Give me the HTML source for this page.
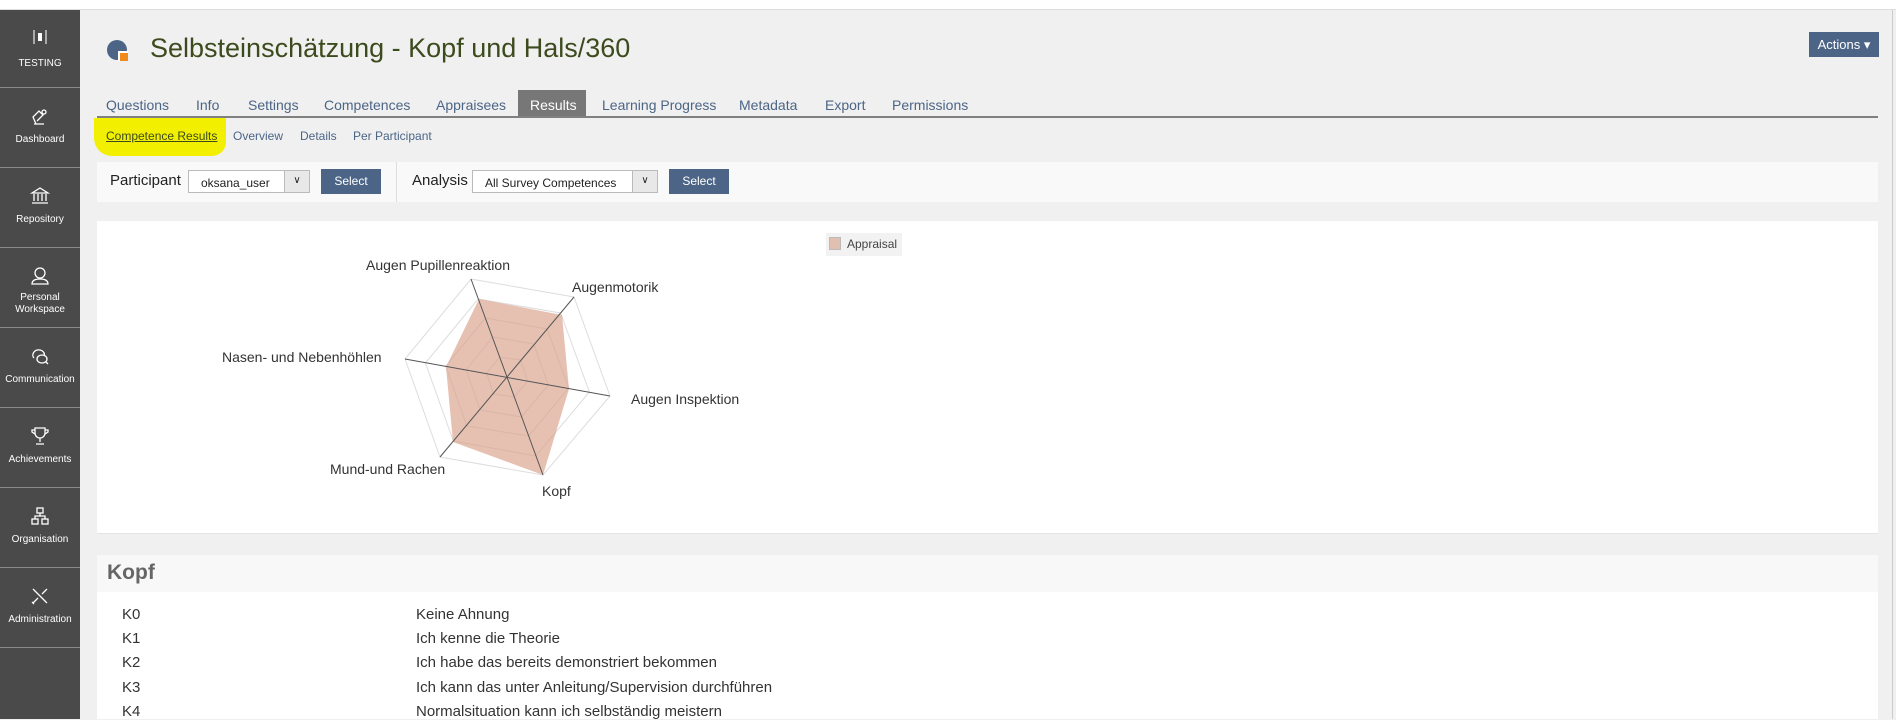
<!DOCTYPE html>
<html><head><meta charset="utf-8"><style>
*{margin:0;padding:0;box-sizing:border-box}
body{width:1896px;height:719px;overflow:hidden;background:#f0f0f0;font-family:"Liberation Sans",Arial,sans-serif;position:relative}
.top{position:absolute;left:0;top:0;width:1896px;height:10px;background:#fff;border-bottom:1px solid #ddd}
.side{position:absolute;left:0;top:10px;width:80px;height:709px;background:#4a4a4a}
.it{position:absolute;left:0;width:80px;height:80px;border-bottom:1px solid #8a8a8a;color:#fff;font-size:10px;text-align:center}
.it .lb{position:absolute;left:0;right:0;top:46px;line-height:12px}
.it svg{position:absolute;left:30px;top:18px}
.abs{position:absolute;white-space:nowrap}
.tab{position:absolute;top:97px;font-size:14px;color:#4c6586}
.sub{position:absolute;top:129px;font-size:12px;color:#4c6586}
.btn{position:absolute;background:#4c6586;color:#fff;font-size:12px;text-align:center}
.row{position:absolute;font-size:15px;color:#333}
</style></head><body>
<div class="top"></div>
<div class="side">
 <div class="it" style="top:0;height:78px"><div style="position:absolute;left:33px;top:20px;width:14px;height:14px;border:2px solid #aaa;border-top:none;border-bottom:none"></div><div style="position:absolute;left:38px;top:23px;width:4px;height:8px;background:#fff"></div><div class="lb" style="top:48px">TESTING</div></div>
 <div class="it" style="top:78px"><svg width="20" height="22" viewBox="0 0 20 22" fill="none" stroke="#fff" stroke-width="1.3"><path d="M4 18h10M6 18l-3-7 6-6 4 4-6 6"/><circle cx="14" cy="6" r="2"/></svg><div class="lb">Dashboard</div></div>
 <div class="it" style="top:158px"><svg width="20" height="20" viewBox="0 0 20 20" fill="none" stroke="#fff" stroke-width="1.3"><path d="M2 7L10 2l8 5H2zM4 8v7M8 8v7M12 8v7M16 8v7M2 17h16"/></svg><div class="lb">Repository</div></div>
 <div class="it" style="top:238px"><svg width="20" height="20" viewBox="0 0 20 20" fill="none" stroke="#fff" stroke-width="1.3"><circle cx="10" cy="7" r="5"/><path d="M2 18c0-4 4-5 8-5s8 1 8 5z"/></svg><div class="lb" style="top:44px">Personal<br>Workspace</div></div>
 <div class="it" style="top:318px"><svg width="20" height="20" viewBox="0 0 20 20" fill="none" stroke="#fff" stroke-width="1.3"><path d="M4 12c-3-3 0-9 6-8 4 1 5 4 4 6"/><ellipse cx="12" cy="13" rx="5" ry="4"/><path d="M16 16l2 2"/></svg><div class="lb">Communication</div></div>
 <div class="it" style="top:398px"><svg width="20" height="20" viewBox="0 0 20 20" fill="none" stroke="#fff" stroke-width="1.3"><path d="M5 2h10v5a5 5 0 0 1-10 0zM10 12v4M6 18h8M5 4H2v2l3 2M15 4h3v2l-3 2"/></svg><div class="lb">Achievements</div></div>
 <div class="it" style="top:478px"><svg width="20" height="20" viewBox="0 0 20 20" fill="none" stroke="#fff" stroke-width="1.3"><rect x="7" y="2" width="6" height="5"/><rect x="2" y="13" width="6" height="5"/><rect x="12" y="13" width="6" height="5"/><path d="M10 7v3M5 13v-3h10v3"/></svg><div class="lb">Organisation</div></div>
 <div class="it" style="top:558px"><svg width="20" height="20" viewBox="0 0 20 20" fill="none" stroke="#fff" stroke-width="1.3"><path d="M3 3l14 14M3 17l5-5M12 8l5-5M2 16l2 2"/></svg><div class="lb">Administration</div></div>
</div>

<svg class="abs" style="left:106px;top:38px" width="24" height="24" viewBox="0 0 24 24"><circle cx="11" cy="12" r="10" fill="#4c6586"/><path d="M12 13h10v10H12z" fill="#fff"/><path d="M14 15h8v8h-8z" fill="#f08a1c"/></svg>
<div class="abs" style="left:150px;top:32px;font-size:27px;color:#3c4b1e;line-height:32px">Selbsteinschätzung - Kopf und Hals/360</div>
<div class="btn" style="left:1809px;top:32px;width:70px;height:25px;line-height:25px;font-size:13px">Actions ▾</div>

<div style="position:absolute;left:518px;top:90px;width:68px;height:27px;background:#777"></div>
<div class="tab" style="left:106px">Questions</div>
<div class="tab" style="left:196px">Info</div>
<div class="tab" style="left:248px">Settings</div>
<div class="tab" style="left:324px">Competences</div>
<div class="tab" style="left:436px">Appraisees</div>
<div class="tab" style="left:530px;color:#fff">Results</div>
<div class="tab" style="left:602px">Learning Progress</div>
<div class="tab" style="left:739px">Metadata</div>
<div class="tab" style="left:825px">Export</div>
<div class="tab" style="left:892px">Permissions</div>
<div style="position:absolute;left:97px;top:116px;width:1781px;height:2px;background:#808080"></div>

<div style="position:absolute;left:94px;top:118px;width:132px;height:38px;background:#f2f000;border-radius:0 0 14px 18px"></div>
<div class="sub" style="left:106px;color:#3c4b1e;text-decoration:underline">Competence Results</div>
<div class="sub" style="left:233px">Overview</div>
<div class="sub" style="left:300px">Details</div>
<div class="sub" style="left:353px">Per Participant</div>

<div style="position:absolute;left:97px;top:162px;width:1781px;height:40px;background:#f9f9f9"></div>
<div style="position:absolute;left:396px;top:162px;width:1px;height:40px;background:#ddd"></div>
<div class="abs" style="left:110px;top:172px;font-size:15px;color:#222">Participant</div>
<div class="abs" style="left:188px;top:170px;width:122px;height:23px;background:#fff;border:1px solid #bbb;font-size:12px;padding:5px 0 0 12px;color:#222">oksana_user<span style="position:absolute;right:0;top:0;width:25px;height:21px;background:#e8e8e8;border-left:1px solid #bbb;font-size:10px;text-align:center;line-height:20px">∨</span></div>
<div class="btn" style="left:321px;top:169px;width:60px;height:25px;line-height:25px">Select</div>
<div class="abs" style="left:412px;top:172px;font-size:15px;color:#222">Analysis</div>
<div class="abs" style="left:472px;top:170px;width:186px;height:23px;background:#fff;border:1px solid #bbb;font-size:12px;padding:5px 0 0 12px;color:#222">All Survey Competences<span style="position:absolute;right:0;top:0;width:25px;height:21px;background:#e8e8e8;border-left:1px solid #bbb;font-size:10px;text-align:center;line-height:20px">∨</span></div>
<div class="btn" style="left:669px;top:169px;width:60px;height:25px;line-height:25px">Select</div>

<div style="position:absolute;left:97px;top:221px;width:1781px;height:313px;background:#fff;border-bottom:1px solid #e4e4e4"></div>
<div style="position:absolute;left:826px;top:233px;width:76px;height:23px;background:#f2f2f2"></div>
<div style="position:absolute;left:829px;top:237px;width:12px;height:13px;background:#e2c0b0;border:1px solid #bbb"></div>
<div class="abs" style="left:847px;top:237px;font-size:12px;color:#444">Appraisal</div>
<svg class="abs" style="left:0;top:0" width="1896" height="719">
<g fill="none" stroke="#ddd" stroke-width="1">
<polygon points="471,279 574,297 610,396 543,475 440,457 405,359"/>
<polygon points="478.2,299 560.6,313 589.4,392 535.8,456 453.4,441 425.4,363"/>
<polygon points="485.4,318 547.2,329 568.8,388 528.6,436 466.8,426 445.8,366"/>
<polygon points="492.6,337 533.8,344 548.2,385 521.4,417 480.2,410 466.2,370"/>
<polygon points="499.8,357 520.4,360 527.6,381 514.2,397 493.6,394 486.6,373"/>
</g>
<polygon points="479,299 562,315 569,389 543,475 453,442 446,367" fill="#d9a088" fill-opacity="0.65"/>
<g stroke="#555" stroke-width="1"><line x1="471" y1="279" x2="543" y2="475"/><line x1="574" y1="297" x2="440" y2="457"/><line x1="610" y1="396" x2="405" y2="359"/></g>
<g font-family="Liberation Sans, Arial, sans-serif" font-size="14" fill="#333">
<text x="366" y="270">Augen Pupillenreaktion</text>
<text x="572" y="292">Augenmotorik</text>
<text x="631" y="404">Augen Inspektion</text>
<text x="222" y="362">Nasen- und Nebenhöhlen</text>
<text x="330" y="474">Mund-und Rachen</text>
<text x="542" y="496">Kopf</text>
</g>
</svg>

<div style="position:absolute;left:97px;top:555px;width:1781px;height:37px;background:#f8f8f8"></div>
<div class="abs" style="left:107px;top:561px;font-size:21px;font-weight:bold;color:#666">Kopf</div>
<div style="position:absolute;left:97px;top:592px;width:1781px;height:127px;background:#fff"></div>
<div class="row" style="left:122px;top:606px">K0</div><div class="row" style="left:416px;top:606px">Keine Ahnung</div>
<div class="row" style="left:122px;top:630px">K1</div><div class="row" style="left:416px;top:630px">Ich kenne die Theorie</div>
<div class="row" style="left:122px;top:654px">K2</div><div class="row" style="left:416px;top:654px">Ich habe das bereits demonstriert bekommen</div>
<div class="row" style="left:122px;top:679px">K3</div><div class="row" style="left:416px;top:679px">Ich kann das unter Anleitung/Supervision durchführen</div>
<div class="row" style="left:122px;top:703px">K4</div><div class="row" style="left:416px;top:703px">Normalsituation kann ich selbständig meistern</div>
<div style="position:absolute;left:1892px;top:10px;width:1px;height:709px;background:#ccc"></div>
</body></html>
